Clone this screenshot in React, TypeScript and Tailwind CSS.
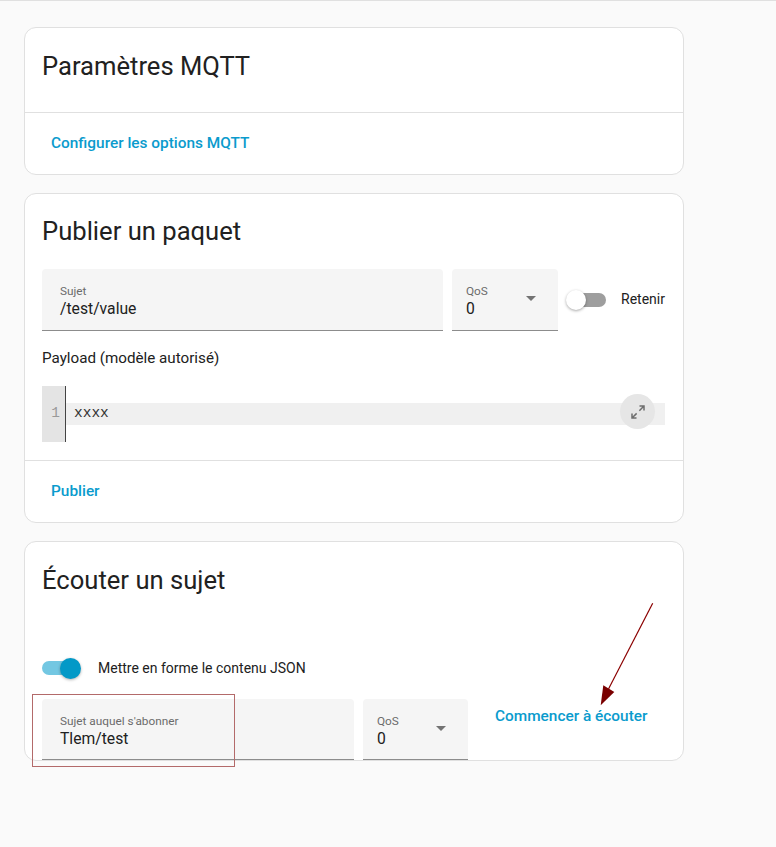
import React from "react";

const font = { fontFamily: "Roboto, 'Noto Sans', sans-serif" };

function Field({ label, value, width, arrow, pl }: { label: string; value: string; width: string; arrow?: boolean; pl: string }) {
  return (
    <div className={`relative ${width} bg-[#f5f5f5] rounded-t-[4px] border-b border-[#8c8c8c] ${pl} pt-[15px]`}>
      <div className="text-[11.8px] leading-[14px] text-[#6b6b6b]">{label}</div>
      <div className="text-[15.7px] leading-[22px] text-[#212121]">{value}</div>
      {arrow && (
        <svg className="absolute right-[22px] top-[27px]" width="10" height="5" viewBox="0 0 10 5">
          <polygon points="0,0 10,0 5,5" fill="#737373" />
        </svg>
      )}
    </div>
  );
}

function Card({ children }: { children: React.ReactNode }) {
  return <div className="w-[660px] bg-white border border-[#e0e0e0] rounded-[12px] overflow-visible">{children}</div>;
}

export default function App() {
  return (
    <div className="relative min-h-[847px] w-[776px] bg-[#fafafa] border-t border-[#e0e0e0] pt-[26px] pl-[24px]" style={font}>
      <div className="flex flex-col gap-[18px]">
        {/* Card 1 */}
        <Card>
          <div className="px-[17px] pt-[22px] pb-[30px] text-[25.6px] leading-[32px] text-[#212121]">Paramètres MQTT</div>
          <div className="border-t border-[#e0e0e0] h-[62px] flex items-center pl-[26px]">
            <span className="text-[15.4px] font-medium text-[#0a9bcd]">Configurer les options MQTT</span>
          </div>
        </Card>

        {/* Card 2 */}
        <Card>
          <div className="px-[17px] pt-[21px] text-[25.6px] leading-[32px] text-[#212121]">Publier un paquet</div>
          <div className="px-[17px] pt-[22px]">
            <div className="flex items-start">
              <Field label="Sujet" value="/test/value" width="w-[401px] h-[62px]" pl="pl-[18px]" />
              <div className="ml-[9px]">
                <Field label="QoS" value="0" width="w-[106px] h-[62px]" pl="pl-[14px]" arrow />
              </div>
              <div className="flex items-center h-[61px] ml-[8px]">
                <div className="relative w-[40px] h-[20px] flex items-center">
                  <div className="absolute left-[4px] w-[36px] h-[14px] rounded-full bg-[#9e9e9e]" />
                  <div className="absolute left-0 w-[20px] h-[20px] rounded-full bg-white shadow-[0_1px_3px_rgba(0,0,0,0.35)]" />
                </div>
                <span className="ml-[15px] text-[14px] text-[#212121]">Retenir</span>
              </div>
            </div>
            <div className="mt-[15px] text-[15.2px] leading-[24px] text-[#212121]">Payload (modèle autorisé)</div>
            <div className="relative mt-[16px] flex h-[56px] w-[623px]">
              <div className="w-[24px] h-full bg-[#e4e4e4] border-r border-[#444] flex items-center justify-end pr-[5px] text-[#999] text-[14.5px]" style={{ fontFamily: "'Liberation Mono', monospace" }}>1</div>
              <div className="flex-1 flex items-center">
                <div className="w-full h-[22px] bg-[#f0f0f0] flex items-center pl-[8px] text-[14.5px] text-[#333]" style={{ fontFamily: "'Liberation Mono', monospace" }}>xxxx</div>
              </div>
              <div className="absolute right-[10px] top-[8px] w-[35px] h-[35px] rounded-full bg-[#e6e6e6] flex items-center justify-center">
                <svg width="18" height="18" viewBox="0 0 24 24">
                  <path fill="#6e6e6e" d="M10,21V19H6.41L10.91,14.5L9.5,13.09L5,17.59V14H3V21H10M14.5,10.91L19,6.41V10H21V3H14V5H17.59L13.09,9.5L14.5,10.91Z" />
                </svg>
              </div>
            </div>
          </div>
          <div className="mt-[18px] border-t border-[#e0e0e0] h-[62px] flex items-center pl-[26px]">
            <span className="text-[15.4px] font-medium text-[#0a9bcd]">Publier</span>
          </div>
        </Card>

        {/* Card 3 */}
        <Card>
          <div className="px-[17px] pt-[22px] text-[25.6px] leading-[32px] text-[#212121]">Écouter un sujet</div>
          <div className="px-[17px]">
            <div className="mt-[52px] h-[40px] flex items-center">
              <div className="relative w-[40px] h-[21px] flex items-center">
                <div className="absolute left-0 w-[36px] h-[14px] rounded-full bg-[#73c7e2]" />
                <div className="absolute left-[18px] w-[21px] h-[21px] rounded-full bg-[#0399c7] shadow-[0_1px_3px_rgba(0,0,0,0.3)]" />
              </div>
              <span className="ml-[16px] text-[14px] text-[#212121]">Mettre en forme le contenu JSON</span>
            </div>
            <div className="relative mt-[11px] flex items-start">
              <Field label="Sujet auquel s'abonner" value="Tlem/test" width="w-[312px] h-[61px]" pl="pl-[18px]" />
              <div className="ml-[9px]">
                <Field label="QoS" value="0" width="w-[105px] h-[61px]" pl="pl-[14px]" arrow />
              </div>
              <div className="ml-[27px] h-[36px] flex items-center">
                <span className="text-[15.4px] font-medium text-[#0a9bcd]">Commencer à écouter</span>
              </div>
              <div className="absolute left-[-10px] top-[-5px] w-[203px] h-[73px] border-[1.5px] border-[#b36a6a] pointer-events-none" />
            </div>
          </div>
        </Card>
      </div>

      <svg className="absolute left-0 top-0 pointer-events-none" width="776" height="847">
        <line x1="652.7" y1="602.3" x2="608.5" y2="688" stroke="#8b0000" strokeWidth="1.2" />
        <polygon points="603.3,684.3 614.3,691 600.7,704.3" fill="#7a0000" />
      </svg>
    </div>
  );
}
